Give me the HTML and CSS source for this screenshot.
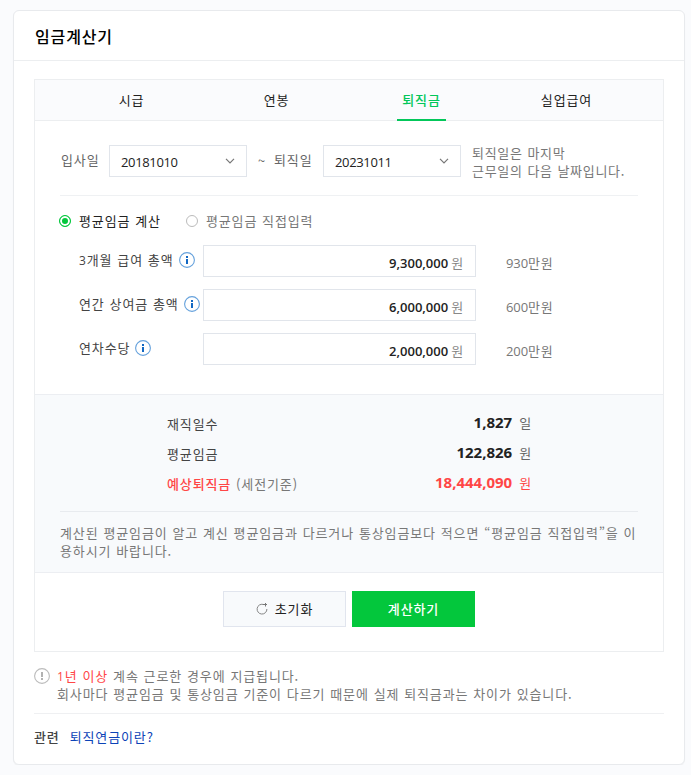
FILE: index.html
```html
<!DOCTYPE html>
<html lang="ko">
<head>
  <meta charset="UTF-8">
  <title>임금계산기</title>
  <link rel="stylesheet" href="styles.css">
</head>
<body>
  <section class="card">
    <h1 class="title">임금계산기</h1>

    <div class="calculator">
      <ul class="tabs">
        <li><a class="tab">시급</a></li>
        <li><a class="tab">연봉</a></li>
        <li><a class="tab active">퇴직금</a></li>
        <li><a class="tab">실업급여</a></li>
      </ul>

      <div class="form">
        <div class="period">
          <span class="period-label">입사일</span>
          <div class="select">
            <span class="date">20181010</span>
            <svg width="10" height="6" viewBox="0 0 10 6"><path d="M1 .8l4 4 4-4" fill="none" stroke="#777" stroke-width="1.2"/></svg>
          </div>
          <span class="tilde">~</span>
          <span class="period-label end">퇴직일</span>
          <div class="select">
            <span class="date">20231011</span>
            <svg width="10" height="6" viewBox="0 0 10 6"><path d="M1 .8l4 4 4-4" fill="none" stroke="#777" stroke-width="1.2"/></svg>
          </div>
          <p class="period-note">퇴직일은 마지막<br>근무일의 다음 날짜입니다.</p>
        </div>

        <div class="options">
          <label class="option checked"><span class="radio"></span>평균임금 계산</label>
          <label class="option"><span class="radio"></span>평균임금 직접입력</label>
        </div>

        <div class="row">
          <div class="row-label"><span><span class="digit">3</span>개월 급여 총액</span>
            <svg class="info" width="16" height="16" viewBox="0 0 16 16"><circle cx="8" cy="8" r="7.4" fill="none" stroke="#65a1dc" stroke-width="1.1"/><path d="M7 4h2v2H7zM7 7h2v5H7z" fill="#1268c3"/></svg>
          </div>
          <div class="field"><strong>9,300,000</strong><em>원</em></div>
          <span class="hint"><span class="num">930</span>만원</span>
        </div>
        <div class="row">
          <div class="row-label"><span>연간 상여금 총액</span>
            <svg class="info" width="16" height="16" viewBox="0 0 16 16"><circle cx="8" cy="8" r="7.4" fill="none" stroke="#65a1dc" stroke-width="1.1"/><path d="M7 4h2v2H7zM7 7h2v5H7z" fill="#1268c3"/></svg>
          </div>
          <div class="field"><strong>6,000,000</strong><em>원</em></div>
          <span class="hint"><span class="num">600</span>만원</span>
        </div>
        <div class="row">
          <div class="row-label"><span>연차수당</span>
            <svg class="info" width="16" height="16" viewBox="0 0 16 16"><circle cx="8" cy="8" r="7.4" fill="none" stroke="#65a1dc" stroke-width="1.1"/><path d="M7 4h2v2H7zM7 7h2v5H7z" fill="#1268c3"/></svg>
          </div>
          <div class="field"><strong>2,000,000</strong><em>원</em></div>
          <span class="hint"><span class="num">200</span>만원</span>
        </div>
      </div>

      <div class="result">
        <dl class="result-list">
          <div class="result-row"><dt>재직일수</dt><dd><strong>1,827</strong>일</dd></div>
          <div class="result-row"><dt>평균임금</dt><dd><strong>122,826</strong>원</dd></div>
          <div class="result-row total"><dt><b>예상퇴직금</b> <span>(세전기준)</span></dt><dd><strong>18,444,090</strong>원</dd></div>
        </dl>
        <p class="result-note">계산된 평균임금이 알고 계신 평균임금과 다르거나 통상임금보다 적으면 “평균임금 직접입력”을 이<br>용하시기 바랍니다.</p>
      </div>

      <div class="buttons">
        <button class="btn reset">
          <svg width="12" height="12" viewBox="0 0 12 12"><path d="M7.2 1.4A4.9 4.9 0 1 0 10.9 6" fill="none" stroke="#858585" stroke-width="1"/><path d="M7 1.5h4M9.5 0v3.5" fill="none" stroke="#777" stroke-width="1"/></svg>
          초기화
        </button>
        <button class="btn submit">계산하기</button>
      </div>
    </div>

    <div class="notice">
      <svg width="16" height="16" viewBox="0 0 16 16"><circle cx="8" cy="8" r="7.4" fill="none" stroke="#bbb" stroke-width="1.1"/><path d="M7.1 4h1.8v5H7.1zM7.1 10h1.8v2H7.1z" fill="#aaa"/></svg>
      <p><b><span class="digit">1</span>년 이상</b> 계속 근로한 경우에 지급됩니다.<br>회사마다 평균임금 및 통상임금 기준이 다르기 때문에 실제 퇴직금과는 차이가 있습니다.</p>
    </div>

    <div class="related"><strong>관련</strong><a>퇴직연금이란?</a></div>
  </section>
</body>
</html>
```

FILE: styles.css
```css
* {
  box-sizing: border-box;
  margin: 0;
  padding: 0;
}

body {
  background: #fafbfd;
  color: #444;
  font-family: 'Noto Sans CJK KR', sans-serif;
  font-size: 13px;
  line-height: 18px;
  letter-spacing: 0.87px;
  word-spacing: 0.4px;
}

svg {
  display: block;
  flex: none;
}

.card {
  width: 672px;
  height: 755px;
  margin: 10px 0 0 13px;
  background: #fff;
  border: 1px solid #e8eaed;
  border-radius: 6px;
  box-shadow: 0 1px 1px rgba(0, 0, 0, 0.04);
}

.title {
  height: 50px;
  padding-left: 21px;
  border-bottom: 1px solid #eceef0;
  color: #000;
  font-size: 16px;
  font-weight: 500;
  line-height: 50px;
}

.calculator {
  width: 630px;
  height: 573px;
  margin: 18px 0 0 20px;
  border: 1px solid #eceef0;
}

/* tabs */
.tabs {
  display: flex;
  height: 41px;
  padding: 0 24px;
  background: #fafbfd;
  border-bottom: 1px solid #eceef0;
  list-style: none;
}

.tabs li {
  flex: 1;
  text-align: center;
}

.tab {
  display: inline-block;
  height: 41px;
  padding: 0 5px;
  color: #222;
  line-height: 40px;
}

.tab.active {
  border-bottom: 2px solid #03c75a;
  color: #03c75a;
  font-weight: 500;
}

/* form */
.form {
  height: 273px;
  padding: 24px 25px 0;
}

.period {
  display: flex;
  height: 51px;
  border-bottom: 1px solid #eff1f3;
  color: #666;
}

.period-label {
  width: 49px;
  padding-left: 1px;
  line-height: 30px;
}

.period-label.end {
  padding-left: 0;
}

.select {
  display: flex;
  align-items: center;
  justify-content: space-between;
  width: 138px;
  height: 32px;
  padding: 0 11px;
  border: 1px solid #e1e5eb;
}

.date {
  padding-top: 2px;
  color: #222;
  font-family: 'Open Sans', sans-serif;
  letter-spacing: -0.35px;
}

.tilde {
  width: 27px;
  padding-left: 11px;
  line-height: 32px;
}

.period-note {
  margin-left: 11px;
  color: #777;
  letter-spacing: 0.7px;
}

.period-note,
.result-note {
  margin-top: -1px;
}

.options {
  display: flex;
  gap: 25px;
  height: 49px;
  margin-left: -1px;
  padding-top: 16px;
  color: #777;
}

.option {
  display: flex;
  gap: 8px;
}

.option.checked {
  color: #222;
}

.radio {
  width: 12px;
  height: 12px;
  margin-top: 3px;
  border: 1px solid #bbb;
  border-radius: 50%;
}

.checked .radio {
  border-color: #03c73c;
  background: #03c73c;
  box-shadow: inset 0 0 0 2px #fff;
}

.row {
  display: flex;
  height: 32px;
  margin-bottom: 12px;
  margin-left: -1px;
  padding-left: 20px;
}

.row-label {
  display: flex;
  gap: 5px;
  width: 124px;
  padding-top: 6px;
  white-space: nowrap;
}

.info {
  margin-top: 1px;
}

.digit {
  font-family: 'Open Sans', sans-serif;
  font-size: 12px;
  line-height: 1;
}

.field {
  display: flex;
  justify-content: flex-end;
  gap: 3px;
  width: 273px;
  padding: 8px 11px 0 0;
  border: 1px solid #e1e5eb;
}

.field strong {
  color: #222;
  font-family: 'Open Sans', sans-serif;
  font-weight: 600;
  letter-spacing: 0;
}

.field em {
  color: #888;
  font-style: normal;
}

.hint {
  margin-left: 30px;
  padding-top: 9px;
  color: #777;
}

.num {
  font-family: 'Open Sans', sans-serif;
  letter-spacing: -0.1px;
}

/* result */
.result {
  height: 179px;
  padding: 12px 25px 0;
  background: #f8fafc;
  border-top: 1px solid #eceef2;
  border-bottom: 1px solid #eceef2;
}

.result-list {
  height: 105px;
  padding: 0 106px 0 107px;
  border-bottom: 1px solid #e8ebef;
}

.result-row {
  display: flex;
  justify-content: space-between;
  height: 30px;
  line-height: 30px;
}

.result-row dt {
  padding-top: 2px;
}

.result-row dd {
  color: #666;
}

.result-row strong {
  margin-right: 7px;
  color: #222;
  font-family: 'Open Sans', sans-serif;
  font-size: 15px;
  font-weight: 700;
  letter-spacing: 0;
}

.total b,
.total dd,
.total strong {
  color: #ff4646;
}

.total b {
  font-weight: 500;
}

.total span {
  color: #777;
}

.result-note {
  padding-top: 13px;
  color: #777;
  white-space: nowrap;
}

/* buttons */
.buttons {
  display: flex;
  justify-content: center;
  gap: 6px;
  padding-top: 18px;
}

.btn {
  display: flex;
  align-items: center;
  justify-content: center;
  gap: 7px;
  width: 123px;
  height: 36px;
  border: 1px solid #e1e5ee;
  font: inherit;
  letter-spacing: inherit;
}

.reset {
  background: #f8fafc;
  color: #222;
}

.submit {
  background: #03c73c;
  border-color: #03c73c;
  color: #fff;
  font-weight: 500;
}

/* notice */
.notice {
  display: flex;
  gap: 7px;
  width: 630px;
  height: 62px;
  margin-left: 20px;
  padding-top: 16px;
  border-bottom: 1px solid #eff0f2;
  color: #777;
}

.notice p {
  margin-top: -1px;
}

.notice b {
  color: #ff4646;
  font-weight: 400;
}

.related {
  display: flex;
  gap: 10px;
  padding: 14px 20px;
}

.related strong {
  font-weight: 500;
}

.related a {
  color: #0c43b7;
}
```
